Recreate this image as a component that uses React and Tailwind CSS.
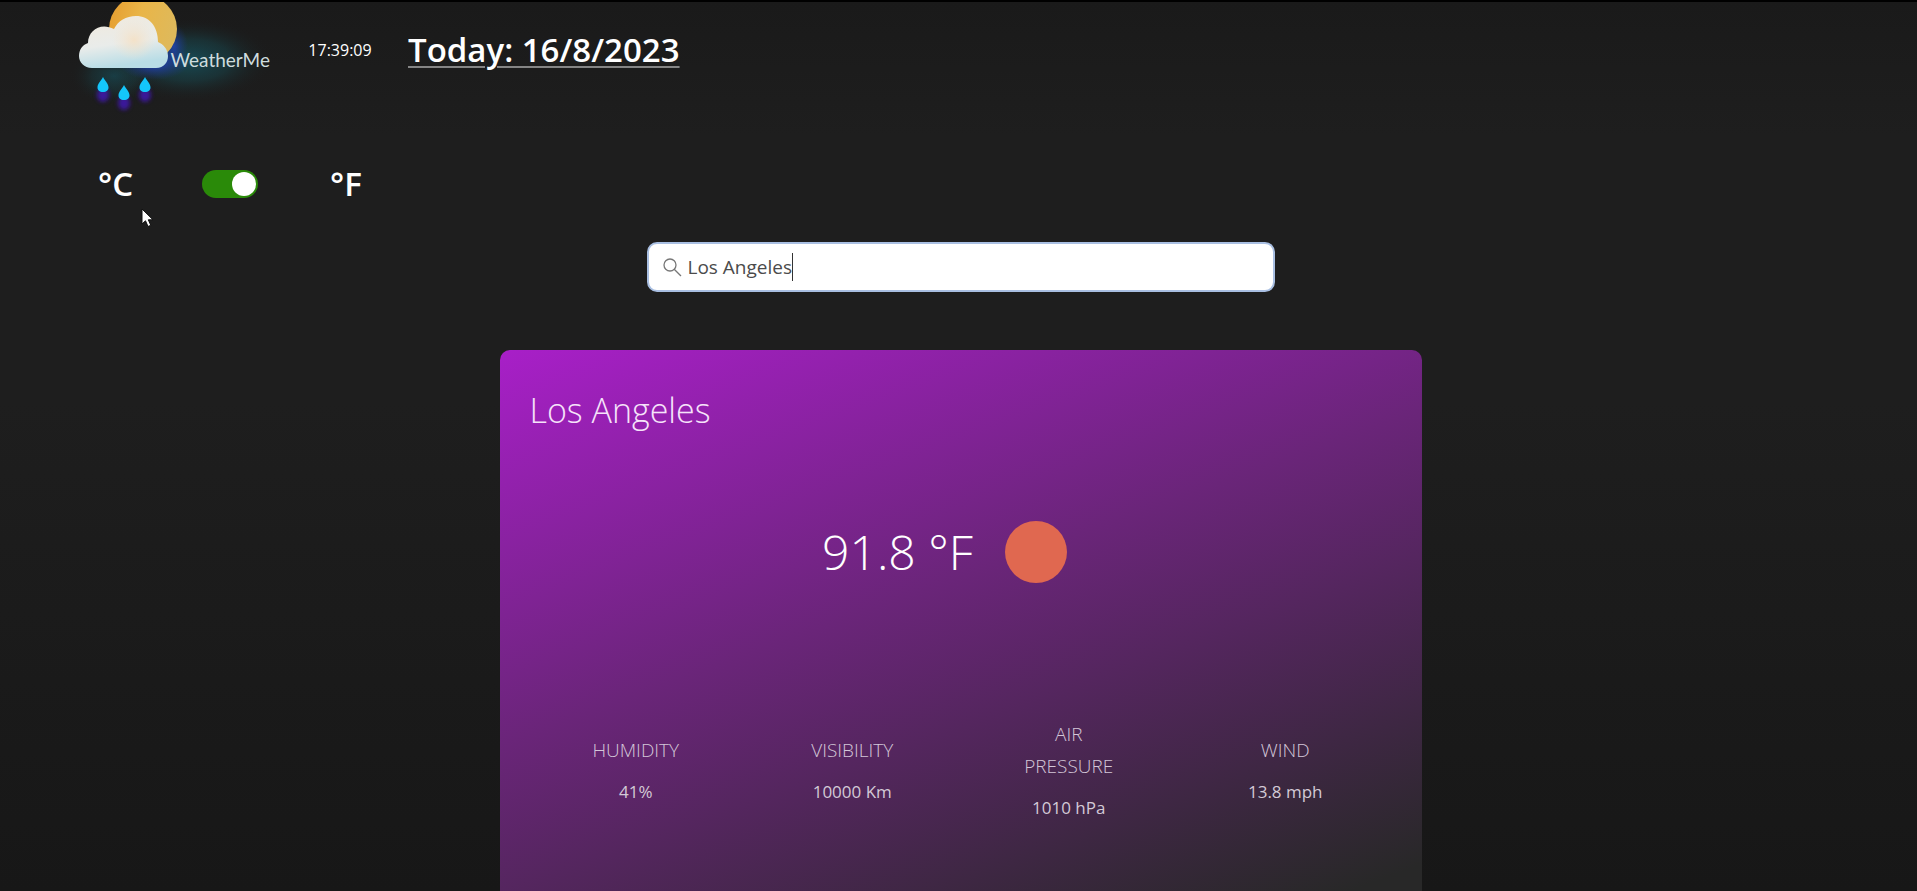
import { useState } from "react";

const metrics = [
  { label: "HUMIDITY", value: "41%" },
  { label: "VISIBILITY", value: "10000 Km" },
  { label: "AIR PRESSURE", value: "1010 hPa" },
  { label: "WIND", value: "13.8 mph" },
];

function Drop({ x, y }) {
  return (
    <g transform={`translate(${x} ${y})`}>
      <ellipse cx="0" cy="18" rx="6" ry="7" fill="#4413c4" opacity="0.75" filter="url(#soft)" />
      <path d="M0 0C2 4 5.5 6.5 5.5 10.5C5.5 13 3.5 15 0 15S-5.5 13 -5.5 10.5C-5.5 6.5 -2 4 0 0Z" fill="#14c6fb" />
    </g>
  );
}

function WeatherLogo() {
  return (
    <svg width="220" height="118" viewBox="0 4 220 118" className="absolute left-0 top-0 overflow-hidden" aria-hidden="true">
      <defs>
        <linearGradient id="sun" x1="0" y1="0" x2="1" y2="0.3">
          <stop offset="0" stopColor="#e59a2c" />
          <stop offset="0.5" stopColor="#e9b548" />
          <stop offset="1" stopColor="#dfb95a" />
        </linearGradient>
        <linearGradient id="cloud" x1="0" y1="0" x2="0.25" y2="1">
          <stop offset="0" stopColor="#f1e9dc" />
          <stop offset="0.6" stopColor="#e9ecea" />
          <stop offset="1" stopColor="#b9dde6" />
        </linearGradient>
        <radialGradient id="warm">
          <stop offset="0" stopColor="#f6dfc0" stopOpacity="0.8" />
          <stop offset="1" stopColor="#f4e4cf" stopOpacity="0" />
        </radialGradient>
        <radialGradient id="teal">
          <stop offset="0" stopColor="#146a7c" stopOpacity="0.6" />
          <stop offset="0.5" stopColor="#17525b" stopOpacity="0.4" />
          <stop offset="1" stopColor="#1c1c1c" stopOpacity="0" />
        </radialGradient>
        <radialGradient id="blue">
          <stop offset="0" stopColor="#2546d8" stopOpacity="0.95" />
          <stop offset="1" stopColor="#1f3690" stopOpacity="0" />
        </radialGradient>
        <filter id="soft" x="-50%" y="-50%" width="200%" height="200%">
          <feGaussianBlur stdDeviation="2" />
        </filter>
      </defs>
      <ellipse cx="118" cy="62" rx="86" ry="42" fill="url(#teal)" />
      <ellipse cx="44" cy="78" rx="44" ry="30" fill="url(#teal)" opacity="0.7" />
      <ellipse cx="84" cy="64" rx="36" ry="18" fill="url(#blue)" />
      <ellipse cx="104" cy="48" rx="14" ry="22" fill="url(#blue)" opacity="0.7" />
      <circle cx="73" cy="31" r="34" fill="url(#sun)" />
      <path
        d="M22 70H86C94 70 98 64 98 58C98 51 93 46 88 44C88 28 79 18 66 18C56 18 48 23 44 31C31 24 18 32 18 45C12 47 9 52 9 58C9 64 14 70 22 70Z"
        fill="url(#cloud)"
      />
      <ellipse cx="64" cy="42" rx="22" ry="20" fill="url(#warm)" />
      <Drop x={33} y={79} />
      <Drop x={54} y={87} />
      <Drop x={75} y={79} />
    </svg>
  );
}

function Header() {
  return (
    <header className="flex h-24 items-center pl-[66px]">
      <a href="#home" className="relative flex h-full w-50 items-center justify-end pt-5 text-[19px] leading-6 text-[#cfdcde] font-[Lato,sans-serif]">
        <WeatherLogo />
        <span className="relative">WeatherMe</span>
      </a>
      <time className="ml-[38px] w-16 text-center text-[16px]">17:39:09</time>
      <h1 className="ml-9 text-[33px] leading-10 font-semibold underline decoration-[#858585] decoration-2 underline-offset-4">
        Today: 16/8/2023
      </h1>
    </header>
  );
}

function UnitSwitch({ fahrenheit, onChange }) {
  return (
    <div className="mt-14 flex h-15 items-center pl-[94px] text-[33px] font-semibold">
      <span className="w-26">°C</span>
      <label className="relative block h-7 w-14">
        <input
          type="checkbox"
          role="switch"
          aria-label="Use Fahrenheit"
          checked={fahrenheit}
          onChange={(e) => onChange(e.target.checked)}
          className="peer block h-7 w-14 cursor-pointer appearance-none rounded-full bg-[#666] checked:bg-[#2a8a09]"
        />
        <span className="pointer-events-none absolute left-0.5 top-0.5 size-6 rounded-full bg-white peer-checked:left-7.5" />
      </label>
      <span className="ml-18">°F</span>
    </div>
  );
}

function SearchBox({ value, onChange }) {
  return (
    <label className="mx-auto mt-7 flex h-[50px] w-[628px] max-w-full items-center rounded-[10px] border-2 border-[#a9bfe2] bg-white pl-3.5 text-[19px] text-[#4b4b4b]">
      <svg width="19" height="19" viewBox="0 0 19 19" fill="none" stroke="#777" strokeWidth="1.3" aria-hidden="true">
        <circle cx="7" cy="7" r="6" />
        <path d="M11.2 11.2L18 18" />
      </svg>
      <input
        type="text"
        aria-label="Search city"
        value={value}
        onChange={(e) => onChange(e.target.value)}
        className="ml-1.5 field-sizing-content outline-none"
      />
      <span className="h-7 w-px bg-[#333]" />
    </label>
  );
}

function WeatherCard() {
  return (
    <section className="mx-auto mt-[58px] flex w-[922px] max-w-full flex-1 flex-col rounded-t-[10px] bg-[linear-gradient(160deg,#a81fc8_0%,#6a2579_45%,#282828_97%)] px-7">
      <h2 className="mt-8 pl-0.5 text-[34px] leading-14 font-light text-[#f6e3fa]">Los Angeles</h2>
      <div className="mt-[74px] flex h-20 items-center justify-center gap-8 pr-8 text-white">
        <p className="text-[48px] font-light">91.8 °F</p>
        <svg width="62" height="62" viewBox="0 0 62 62" aria-label="Clear sky" role="img">
          <circle cx="31" cy="31" r="31" fill="#e06850" />
        </svg>
      </div>
      <dl className="mt-[126px] grid grid-cols-4 items-center text-center leading-8 text-[#d3c6d8]">
        {metrics.map((m) => (
          <div key={m.label} className="flex flex-col items-center gap-2.5">
            <dt className="w-27 text-[19px] font-light">{m.label}</dt>
            <dd className="text-[17px] font-normal text-[#d3cad6]">{m.value}</dd>
          </div>
        ))}
      </dl>
    </section>
  );
}

export default function App() {
  const [fahrenheit, setFahrenheit] = useState(true);
  const [city, setCity] = useState("Los Angeles");

  return (
    <main className="relative flex min-h-screen flex-col border-t-2 border-black bg-[linear-gradient(180deg,#1a1a1a_0%,#1e1e1e_15%,#1e1e1e_45%,#171717_100%)] pl-1 text-white font-['Open_Sans','Noto_Sans',sans-serif]">
      <Header />
      <UnitSwitch fahrenheit={fahrenheit} onChange={setFahrenheit} />
      <SearchBox value={city} onChange={setCity} />
      <WeatherCard />
      <svg width="14" height="20" viewBox="0 0 14 20" className="pointer-events-none absolute left-[141px] top-[206px]" aria-hidden="true">
        <path d="M1 1V16L4.5 12.8L7 18.5L9.8 17.3L7.3 11.8H12Z" fill="#fff" stroke="#111" strokeWidth="1" />
      </svg>
    </main>
  );
}
